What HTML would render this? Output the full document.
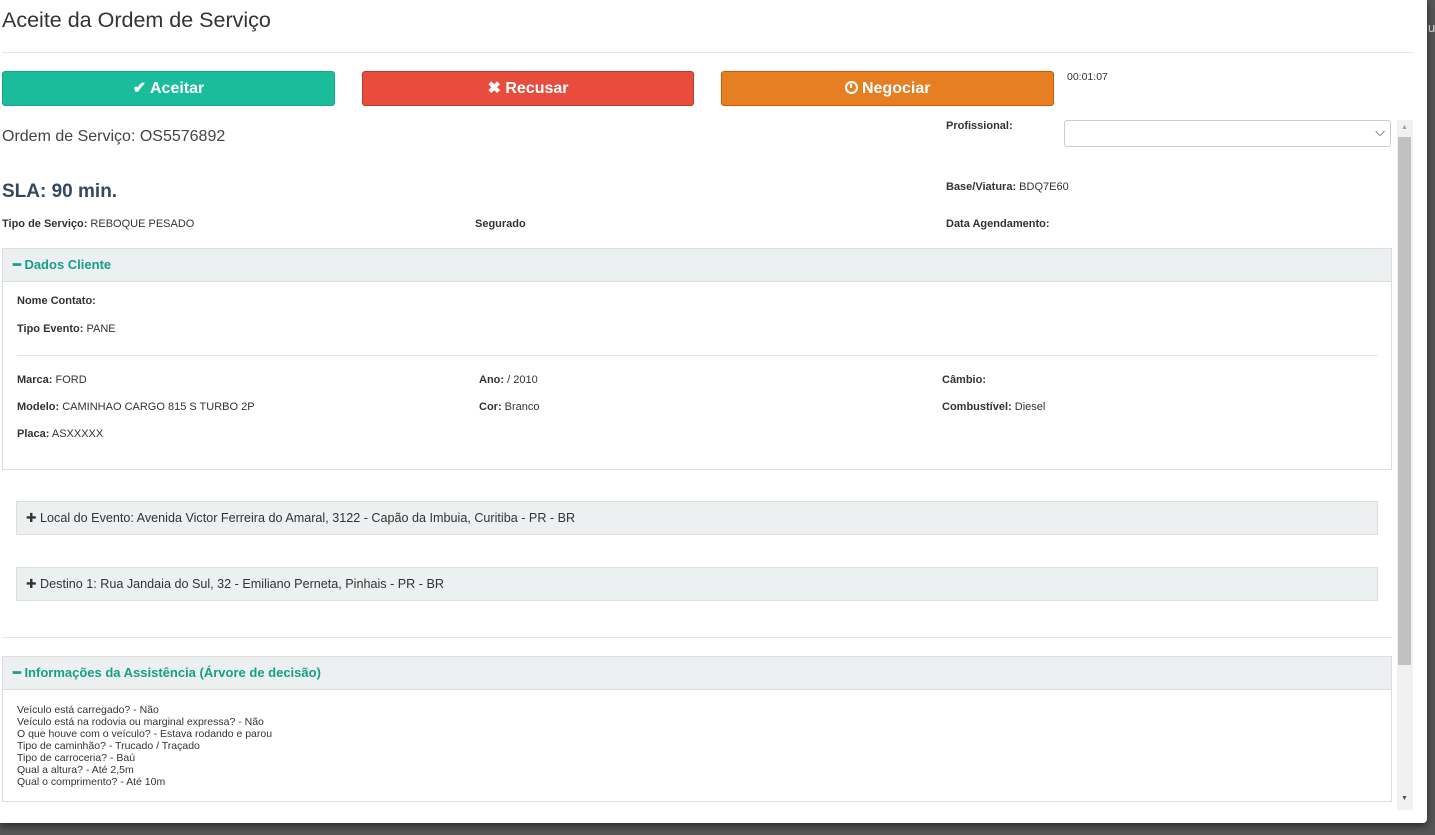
<!DOCTYPE html>
<html><head><meta charset="utf-8"><style>
*{box-sizing:border-box;margin:0;padding:0}
body{width:1435px;height:835px;overflow:hidden;background:#555;font-family:"Liberation Sans",Arial,sans-serif;color:#333;position:relative}
.a{position:absolute;white-space:nowrap}
#modal{position:absolute;left:0;top:0;width:1427px;height:823px;background:#fff;border-radius:0 0 4px 0;box-shadow:0 3px 8px rgba(0,0,0,.5)}
.btn{position:absolute;top:71px;height:35px;border-radius:3px;color:#fff;font-weight:bold;font-size:16px;text-align:center;line-height:34px}
.lbl{font-size:11px;color:#333}
.lbl b{font-weight:bold}
.panel{position:absolute;border:1px solid #ddd;background:#fff}
.ph{background:#ecf0f1;border-bottom:1px solid #ddd;height:33px;line-height:32px;padding-left:10px;color:#16a085;font-weight:bold;font-size:13px}
.gp{position:absolute;background:#ecf0f1;border:1px solid #ddd;height:34px;line-height:33px;padding-left:9px;font-size:12.6px;color:#333}
</style></head><body>
<div class="a" style="left:1428px;top:20px;font-size:13px;color:#ddd">u</div>
<div id="modal">
<div class="a" style="left:2px;top:8px;font-size:21.5px;color:#333">Aceite da Ordem de Serviço</div>
<div class="a" style="left:2px;top:52px;width:1411px;height:1px;background:#e5e5e5"></div>
<div class="btn" style="left:2px;width:333px;background:#1abc9c;border:1px solid #18a689">✔ Aceitar</div>
<div class="btn" style="left:362px;width:332px;background:#e74c3c;border:1px solid #c0392b">✖ Recusar</div>
<div class="btn" style="left:721px;width:333px;background:#e67e22;border:1px solid #d35400"><span style="display:inline-block;width:13px;height:13px;border:2px solid #fff;border-radius:50%;vertical-align:-1px;position:relative"><span style="position:absolute;left:3.5px;top:1px;width:2px;height:4px;background:#fff"></span></span> Negociar</div>
<div class="a" style="left:1067px;top:71px;font-size:10.5px">00:01:07</div>

<div class="a" style="left:1397px;top:120px;width:16px;height:690px;background:#f1f1f1"></div>
<div class="a" style="left:1398px;top:137px;width:13px;height:528px;background:#c1c1c1"></div>
<div class="a" style="left:1401px;top:124px;font-size:7px;color:#a3a3a3">▲</div>
<div class="a" style="left:1401px;top:795px;font-size:7px;color:#505050">▼</div>

<div class="a" style="left:2px;top:128px;font-size:16px;color:#444">Ordem de Serviço: OS5576892</div>
<div class="a lbl" style="left:946px;top:120px"><b>Profissional:</b></div>
<div class="a" style="left:1064px;top:120px;width:327px;height:27px;border:1px solid #ccc;border-radius:3px"><span style="position:absolute;right:5px;top:3px;font-size:13px;color:#333">⌵</span></div>
<div class="a" style="left:2px;top:181px;font-size:19px;font-weight:bold;color:#34495e">SLA: 90 min.</div>
<div class="a lbl" style="left:946px;top:181px"><b>Base/Viatura:</b> BDQ7E60</div>
<div class="a lbl" style="left:2px;top:218px"><b>Tipo de Serviço:</b> REBOQUE PESADO</div>
<div class="a lbl" style="left:475px;top:218px"><b>Segurado</b></div>
<div class="a lbl" style="left:946px;top:218px"><b>Data Agendamento:</b></div>

<div class="panel" style="left:2px;top:248px;width:1390px;height:222px">
<div class="ph">━ Dados Cliente</div>
<div class="a lbl" style="left:14px;top:46px"><b>Nome Contato:</b></div>
<div class="a lbl" style="left:14px;top:74px"><b>Tipo Evento:</b> PANE</div>
<div class="a" style="left:14px;top:106px;width:1361px;height:1px;background:#e5e5e5"></div>
<div class="a lbl" style="left:14px;top:125px"><b>Marca:</b> FORD</div>
<div class="a lbl" style="left:476px;top:125px"><b>Ano:</b> / 2010</div>
<div class="a lbl" style="left:939px;top:125px"><b>Câmbio:</b></div>
<div class="a lbl" style="left:14px;top:152px"><b>Modelo:</b> CAMINHAO CARGO 815 S TURBO 2P</div>
<div class="a lbl" style="left:476px;top:152px"><b>Cor:</b> Branco</div>
<div class="a lbl" style="left:939px;top:152px"><b>Combustível:</b> Diesel</div>
<div class="a lbl" style="left:14px;top:179px"><b>Placa:</b> ASXXXXX</div>
</div>

<div class="gp" style="left:16px;top:501px;width:1362px">✚ Local do Evento: Avenida Victor Ferreira do Amaral, 3122 - Capão da Imbuia, Curitiba - PR - BR</div>
<div class="gp" style="left:16px;top:567px;width:1362px">✚ Destino 1: Rua Jandaia do Sul, 32 - Emiliano Perneta, Pinhais - PR - BR</div>
<div class="a" style="left:2px;top:637px;width:1390px;height:1px;background:#e5e5e5"></div>

<div class="panel" style="left:2px;top:656px;width:1390px;height:146px">
<div class="ph">━ Informações da Assistência (Árvore de decisão)</div>
<div class="a" style="left:14px;top:47px;font-size:10.5px;line-height:12px;color:#333">Veículo está carregado? - Não<br>Veículo está na rodovia ou marginal expressa? - Não<br>O que houve com o veículo? - Estava rodando e parou<br>Tipo de caminhão? - Trucado / Traçado<br>Tipo de carroceria? - Baú<br>Qual a altura? - Até 2,5m<br>Qual o comprimento? - Até 10m</div>
</div>
</div>
</body></html>
